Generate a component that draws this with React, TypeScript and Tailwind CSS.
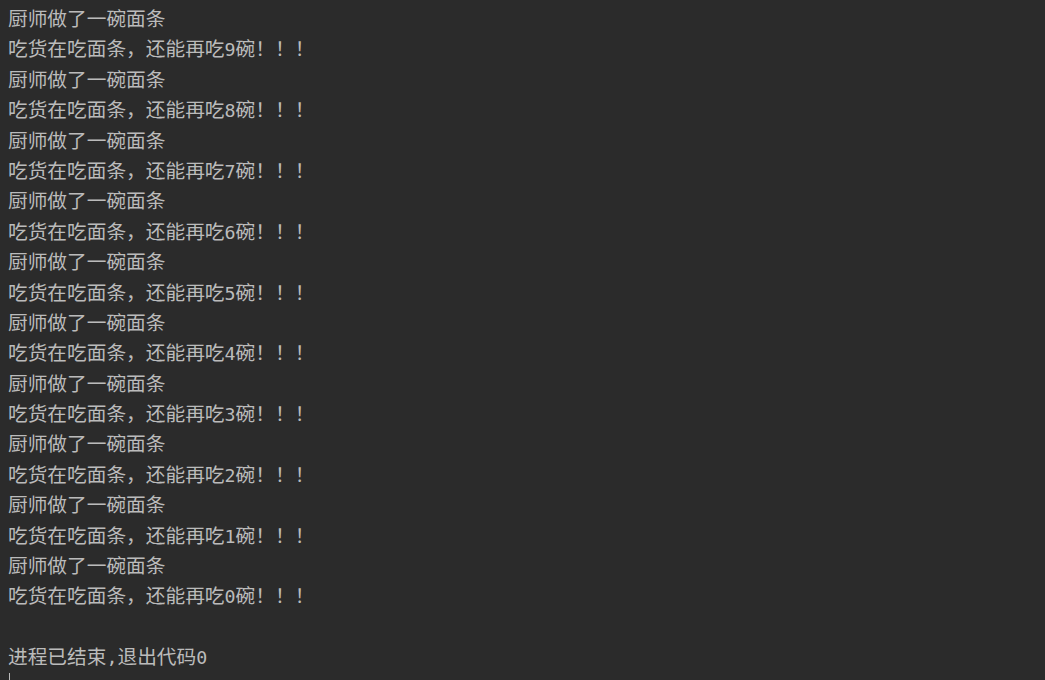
import React from 'react';

const counts = [9, 8, 7, 6, 5, 4, 3, 2, 1, 0];

function Ascii({ children }: { children: React.ReactNode }) {
  return <span className="font-['DejaVu_Sans_Mono',monospace] text-[18.3px] leading-none">{children}</span>;
}

function Line({ children }: { children?: React.ReactNode }) {
  return <div className="h-[30.4px] whitespace-pre overflow-visible">{children}</div>;
}

export default function App() {
  return (
    <div className="w-[1045px] h-[680px] overflow-hidden bg-[#2b2b2b] pt-[3px] pl-[8px] text-[#bbbbbb] text-[19.7px] leading-[30.4px] font-['Noto_Sans_CJK_SC',sans-serif]">
      {counts.map((n) => (
        <React.Fragment key={n}>
          <Line>厨师做了一碗面条</Line>
          <Line>
            吃货在吃面条，还能再吃<Ascii>{n}</Ascii>碗！！！
          </Line>
        </React.Fragment>
      ))}
      <Line />
      <Line>
        进程已结束<Ascii>,</Ascii>退出代码<Ascii>0</Ascii>
      </Line>
      {/* caret */}
      <div className="h-[30.4px] flex items-start pt-[1px] pl-[1px]">
        <div className="w-[1px] h-[20px] bg-[#bbbbbb]" />
      </div>
    </div>
  );
}
